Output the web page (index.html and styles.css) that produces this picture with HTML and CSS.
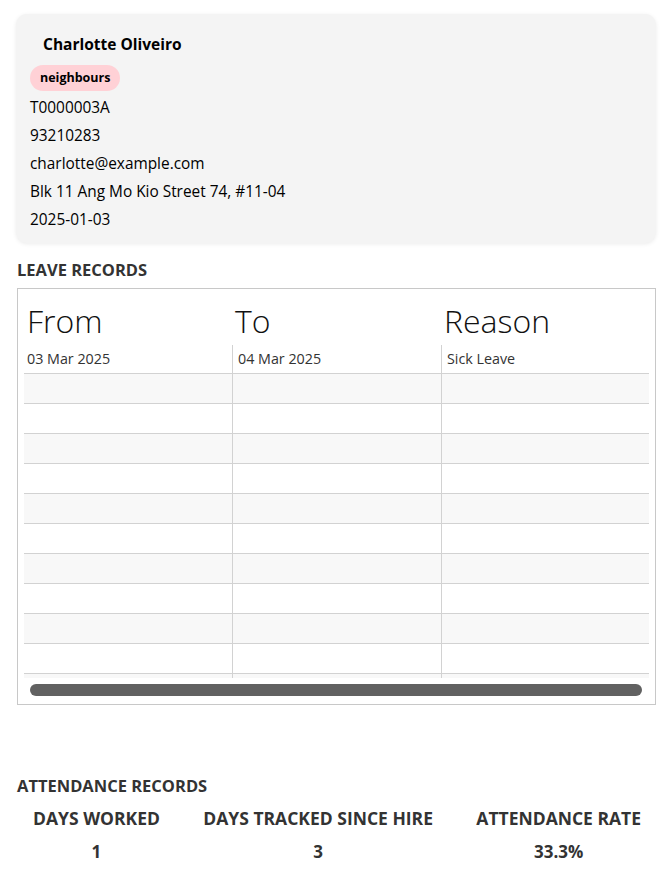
FILE: index.html
```html
<!DOCTYPE html>
<html>
<head>
<meta charset="utf-8">
<link rel="stylesheet" href="styles.css">
</head>
<body>
<div class="page">
  <div class="card">
    <div class="name">Charlotte Oliveiro</div>
    <div class="tags"><span class="tag">neighbours</span></div>
    <div class="field">T0000003A</div>
    <div class="field">93210283</div>
    <div class="field">charlotte@example.com</div>
    <div class="field">Blk 11 Ang Mo Kio Street 74, #11-04</div>
    <div class="field">2025-01-03</div>
  </div>

  <div class="section-title leave-title">LEAVE RECORDS</div>
  <div class="table-box">
    <div class="table">
      <div class="thead">
        <div class="th">From</div>
        <div class="th">To</div>
        <div class="th">Reason</div>
      </div>
      <div class="tbody">
        <div class="tr first"><div class="td">03 Mar 2025</div><div class="td">04 Mar 2025</div><div class="td">Sick Leave</div></div>
        <div class="tr odd"><div class="td"></div><div class="td"></div><div class="td"></div></div>
        <div class="tr"><div class="td"></div><div class="td"></div><div class="td"></div></div>
        <div class="tr odd"><div class="td"></div><div class="td"></div><div class="td"></div></div>
        <div class="tr"><div class="td"></div><div class="td"></div><div class="td"></div></div>
        <div class="tr odd"><div class="td"></div><div class="td"></div><div class="td"></div></div>
        <div class="tr"><div class="td"></div><div class="td"></div><div class="td"></div></div>
        <div class="tr odd"><div class="td"></div><div class="td"></div><div class="td"></div></div>
        <div class="tr"><div class="td"></div><div class="td"></div><div class="td"></div></div>
        <div class="tr odd"><div class="td"></div><div class="td"></div><div class="td"></div></div>
        <div class="tr"><div class="td"></div><div class="td"></div><div class="td"></div></div>
        <div class="tr tail"><div class="td"></div><div class="td"></div><div class="td"></div></div>
      </div>
    </div>
    <div class="scrollbar"><div class="thumb"></div></div>
  </div>

  <div class="section-title att-title">ATTENDANCE RECORDS</div>
  <div class="stats">
    <div class="stat"><div class="stat-label">DAYS WORKED</div><div class="stat-value">1</div></div>
    <div class="stat"><div class="stat-label">DAYS TRACKED SINCE HIRE</div><div class="stat-value">3</div></div>
    <div class="stat"><div class="stat-label">ATTENDANCE RATE</div><div class="stat-value">33.3%</div></div>
  </div>
</div>
</body>
</html>
```
FILE: styles.css
```css
* { box-sizing: border-box; }
html, body { margin: 0; padding: 0; background: #ffffff; }
body {
  font-family: "Open Sans", "Noto Sans", sans-serif;
  color: #000;
}
.page {
  padding: 14px 7px 0 17px;
}
.card {
  background: #f4f4f4;
  border-radius: 11px;
  margin-left: -1px;
  width: 640px;
  padding: 19px 14px 9px 13px;
  box-shadow: 0 1px 4px rgba(0,0,0,0.08);
}
.name {
  font-weight: 700;
  font-size: 15.5px;
  line-height: 22px;
  padding-left: 14px;
  margin-bottom: 10px;
}
.tags { display: flex; height: 26px; margin-bottom: 3px; }
.tag {
  background: #ffd1d6;
  border-radius: 13px;
  font-weight: 700;
  font-size: 12.5px;
  line-height: 26px;
  padding: 0 10px;
  margin-left: 1px;
}
.field {
  font-size: 15.4px;
  line-height: 28px;
  padding-left: 1px;
}
.section-title {
  font-weight: 700;
  font-size: 16.5px;
  color: #333;
  line-height: 20px;
}
.leave-title { margin-top: 17px; margin-bottom: 8px; }
.table-box {
  width: 639px;
  height: 417px;
  border: 1px solid #c8c8c8;
  padding: 6px 6px 0 6px;
}
.table { width: 625px; }
.thead { display: grid; grid-template-columns: 208px 209px 208px; height: 50px; }
.th {
  font-weight: 300;
  font-size: 32px;
  line-height: 50px;
  padding-left: 3px;
  color: #111;
  padding-top: 1px;
}
.tr {
  display: grid;
  grid-template-columns: 208px 209px 208px;
  height: 30px;
  border-bottom: 1px solid #d2d2d2;
  background: #fff;
}
.tr.odd { background: #f8f8f8; }
.tr.first { height: 29px; }
.tr.tail { height: 4px; border-bottom: none; background: #f8f8f8; }
.td {
  border-left: 1px solid #d2d2d2;
  font-size: 14.3px;
  color: #333;
  line-height: 27px;
  padding-left: 5px;
}
.td:first-child { border-left: none; padding-left: 3px; }
.scrollbar { padding: 6px 7px 0 6px; }
.thumb {
  height: 12px;
  background: #616161;
  border-radius: 6px;
}
.att-title { margin-top: 71px; }
.stats {
  display: flex;
  justify-content: space-between;
  width: 639px;
  padding: 0 15px 0 16px;
  margin-top: 11px;
}
.stat { display: flex; flex-direction: column; align-items: center; }
.stat-label { font-weight: 700; font-size: 17.5px; color: #333; line-height: 22px; }
.stat-value { font-weight: 700; font-size: 17px; color: #333; line-height: 22px; margin-top: 12px; }
```
